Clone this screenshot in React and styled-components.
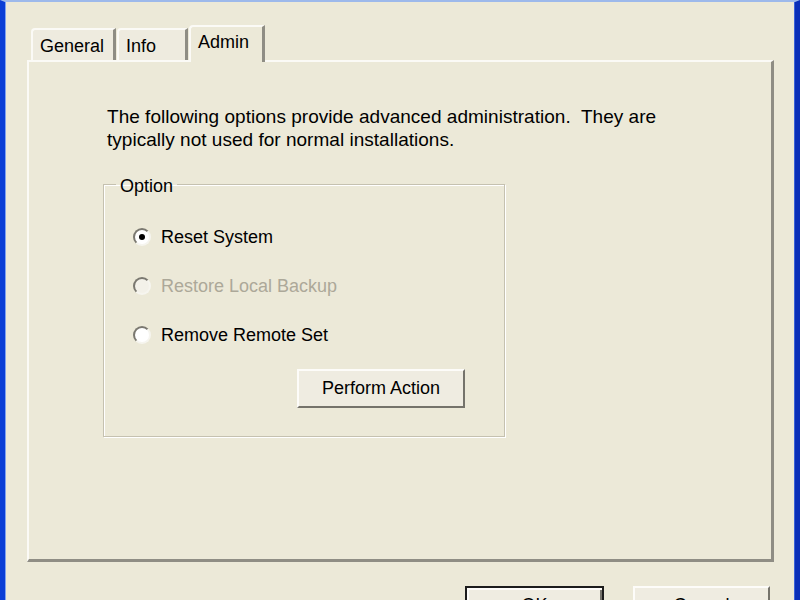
import React from 'react';
import styled, { createGlobalStyle } from 'styled-components';

const Global = createGlobalStyle`
  html, body {
    margin: 0;
    padding: 0;
    background: #ece9d8;
  }
  body {
    font-family: "Liberation Sans", Arial, sans-serif;
    font-size: 18px;
    color: #000000;
  }
`;

const Window = styled.div`
  width: 800px;
  height: 600px;
  box-sizing: border-box;
  overflow: hidden;
  background: #ece9d8;
  border-top: 2px solid #9db9eb;
  border-left: 5px solid #0a3ed6;
  border-right: 5px solid #0a2fb8;
  box-shadow: inset 1px 0 0 #7fa3f0, inset -1px 0 0 #3b62d8;
  padding: 23px 22px 0 22px;
  display: flex;
  flex-direction: column;
`;

const TabStrip = styled.div`
  display: flex;
  align-items: flex-end;
  flex-shrink: 0;
  height: 35px;
  padding-left: 4px;
`;

const Tab = styled.div`
  box-sizing: border-box;
  height: ${p => (p.$active ? '37px' : '32px')};
  width: ${p => p.$width}px;
  margin-right: ${p => (p.$active ? '0' : '1px')};
  margin-bottom: ${p => (p.$active ? '-2px' : '0')};
  padding-left: 7px;
  padding-top: ${p => (p.$active ? '5px' : '6px')};
  background: ${p => (p.$active ? '#ece9d8' : '#eeebdf')};
  border-top: 2px solid #fbfaf6;
  border-left: 2px solid #fbfaf6;
  border-right: 3px solid #8f8d84;
  border-top-left-radius: 4px;
  position: relative;
  z-index: ${p => (p.$active ? 2 : 1)};
  white-space: nowrap;
`;

const Panel = styled.div`
  box-sizing: border-box;
  flex-shrink: 0;
  width: 747px;
  height: 502px;
  border-top: 2px solid #fbfaf6;
  border-left: 2px solid #fbfaf6;
  border-right: 3px solid #8f8d84;
  border-bottom: 3px solid #8f8d84;
  padding: 43px 0 0 78px;
`;

const Intro = styled.p`
  margin: 0;
  line-height: 23px;
  font-size: 19px;
  letter-spacing: 0.02px;
`;

const Group = styled.fieldset`
  box-sizing: border-box;
  width: 402px;
  height: 264px;
  margin: 22px 0 0 -4px;
  padding: 0 0 0 29px;
  border: 1px solid #c5c1b0;
  box-shadow: 1px 1px 0 #ffffff, inset 1px 1px 0 #ffffff;
`;

const Legend = styled.legend`
  padding: 3px 4px 0 4px;
  margin-left: -17px;
  line-height: 20px;
  height: 20px;
`;

const RadioList = styled.div`
  display: flex;
  flex-direction: column;
  gap: 27px;
  margin-top: 30px;
`;

const RadioRow = styled.label`
  display: flex;
  align-items: center;
  gap: 10px;
  height: 22px;
  color: ${p => (p.$disabled ? '#aca899' : '#000000')};
`;

const RadioDot = styled.span`
  box-sizing: border-box;
  width: 18px;
  height: 18px;
  border-radius: 50%;
  border: 2px solid;
  border-color: #7a7870 #f6f5ef #f6f5ef #7a7870;
  background: ${p => (p.$disabled ? '#f3f1e9' : '#ffffff')};
  display: flex;
  align-items: center;
  justify-content: center;
  &::after {
    content: '';
    width: 6px;
    height: 6px;
    border-radius: 50%;
    background: ${p => (p.$checked ? '#000000' : 'transparent')};
  }
`;

const ActionRow = styled.div`
  display: flex;
  justify-content: flex-end;
  padding-right: 39px;
  margin-top: 23px;
`;

const Button = styled.button`
  box-sizing: border-box;
  flex-shrink: 0;
  width: ${p => p.$width}px;
  height: 39px;
  font-family: "Liberation Sans", Arial, sans-serif;
  font-size: 18px;
  color: #000000;
  background: #efece1;
  border: 2px solid;
  border-color: ${p =>
    p.$default ? '#1c1c1c' : '#fdfcf9 #75736b #75736b #fdfcf9'};
  box-shadow: ${p =>
    p.$default
      ? 'inset 2px 2px 0 #fdfcf9, inset -2px -2px 0 #75736b'
      : 'none'};
  padding: 0;
`;

const Footer = styled.div`
  display: flex;
  flex-shrink: 0;
  justify-content: flex-end;
  gap: 29px;
  padding-right: 3px;
  margin-top: 24px;
`;

export default function App() {
  return (
    <>
      <Global />
      <Window>
        <TabStrip>
          <Tab $width={85}>General</Tab>
          <Tab $width={71}>Info</Tab>
          <Tab $width={76} $active>Admin</Tab>
        </TabStrip>
        <Panel>
          <Intro>
            The following options provide advanced administration.&nbsp; They are
            <br />
            typically not used for normal installations.
          </Intro>
          <Group>
            <Legend>Option</Legend>
            <RadioList>
              <RadioRow>
                <RadioDot $checked />
                Reset System
              </RadioRow>
              <RadioRow $disabled>
                <RadioDot $disabled />
                Restore Local Backup
              </RadioRow>
              <RadioRow>
                <RadioDot />
                Remove Remote Set
              </RadioRow>
            </RadioList>
            <ActionRow>
              <Button $width={168}>Perform Action</Button>
            </ActionRow>
          </Group>
        </Panel>
        <Footer>
          <Button $width={139} $default>OK</Button>
          <Button $width={137}>Cancel</Button>
        </Footer>
      </Window>
    </>
  );
}
